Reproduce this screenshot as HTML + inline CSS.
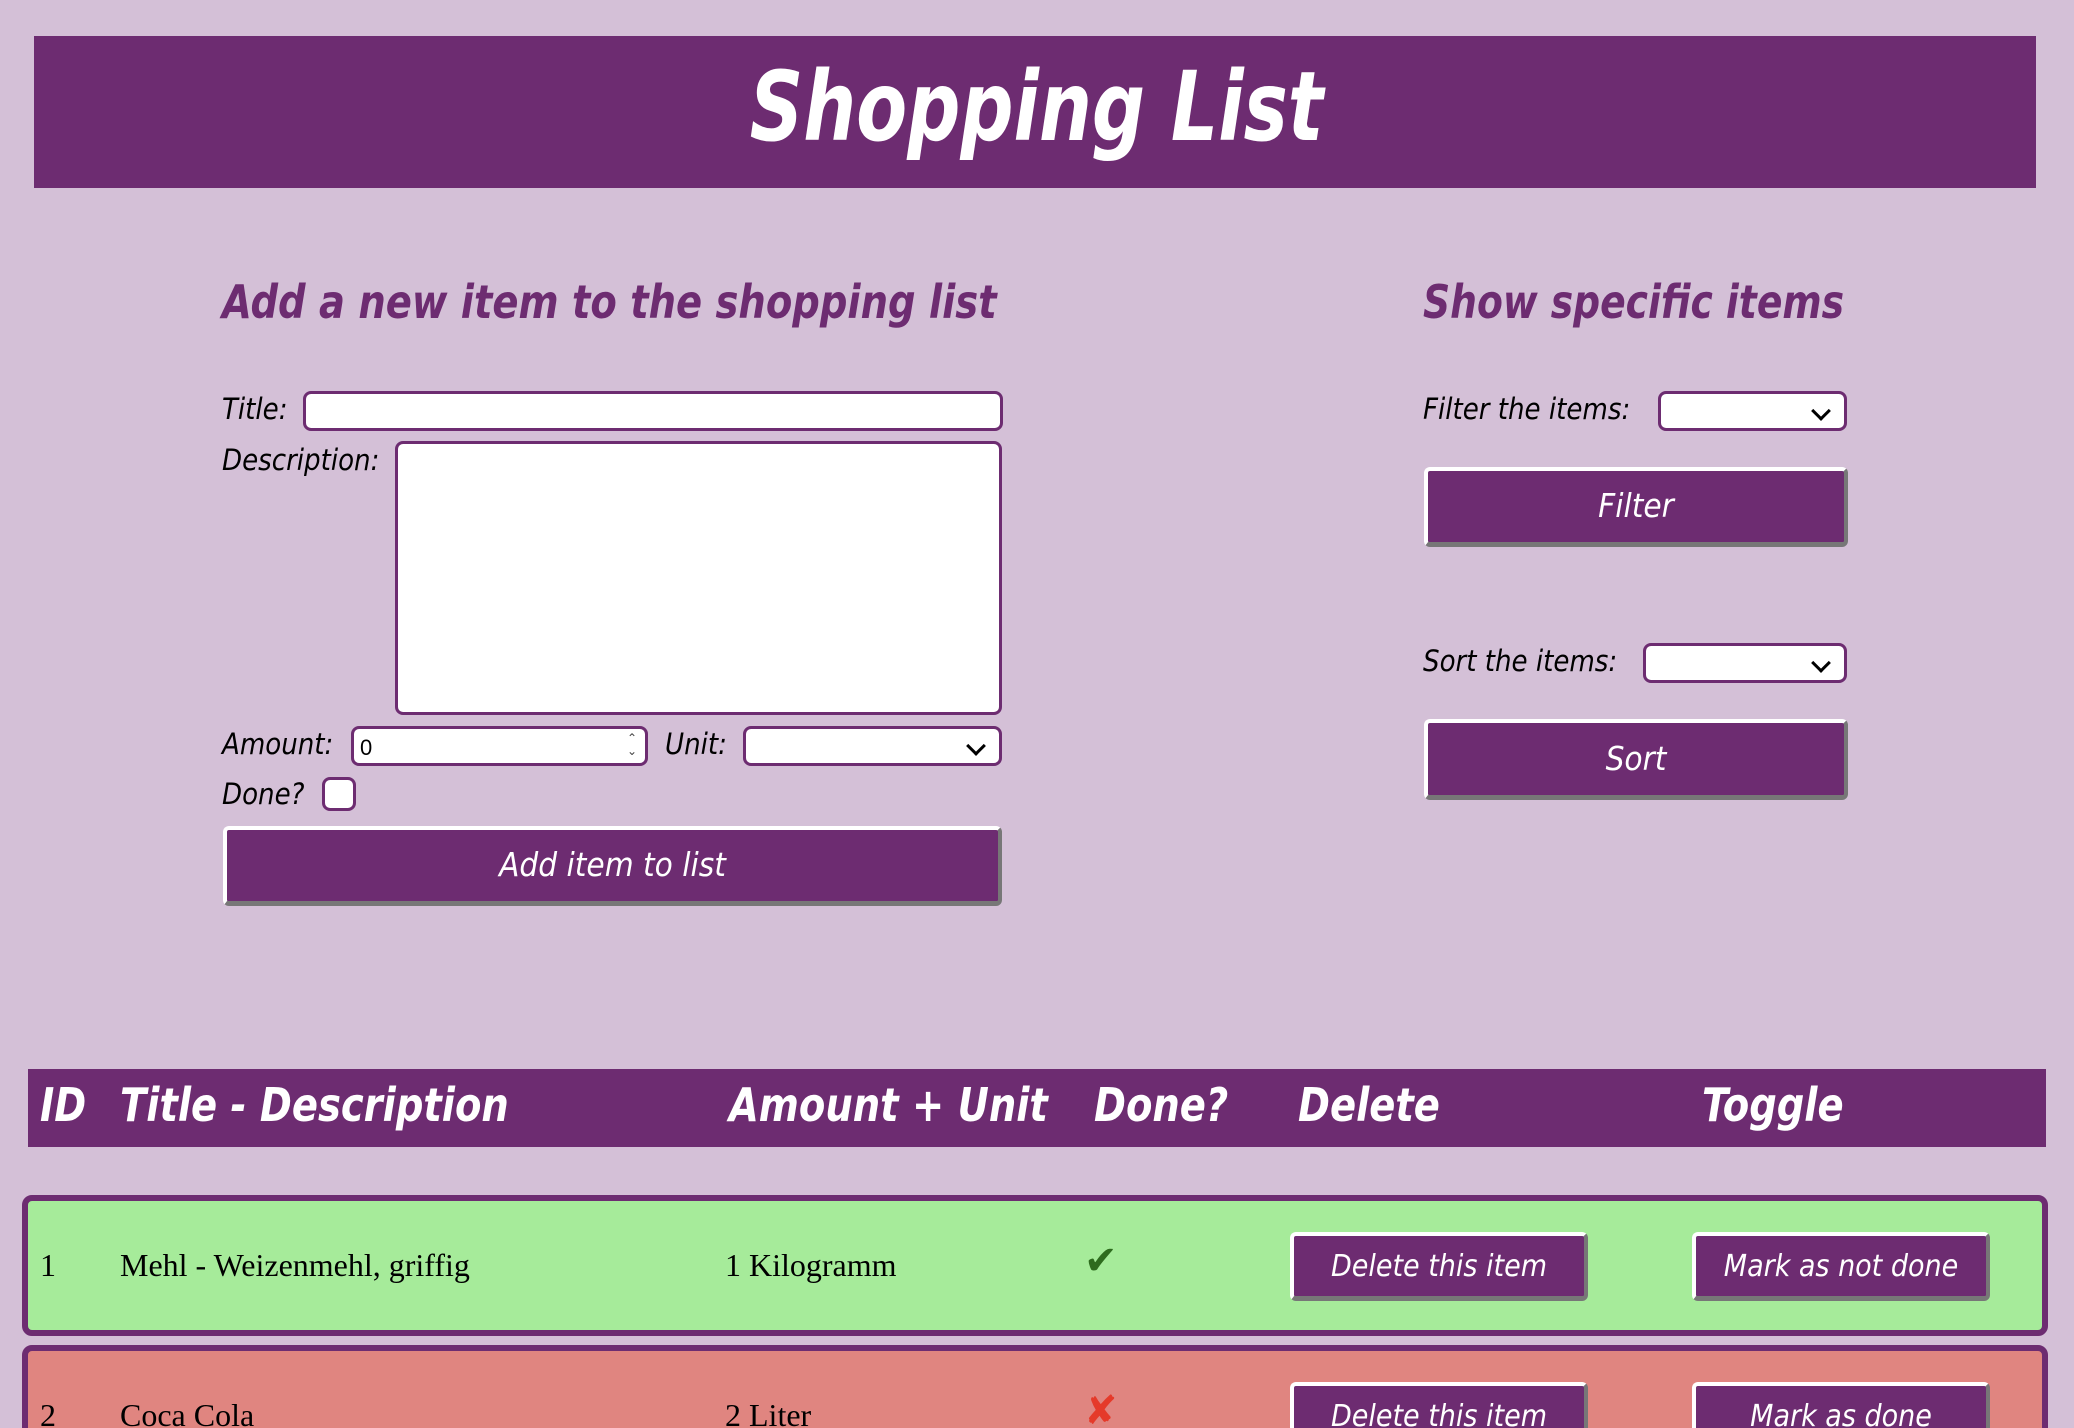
<!DOCTYPE html>
<html><head><meta charset="utf-8">
<style>
*{box-sizing:border-box;margin:0;padding:0}
html,body{width:2074px;height:1428px;overflow:hidden;background:#d4c0d7;position:relative}
.hf{font-family:"DejaVu Sans Condensed","DejaVu Sans","Liberation Sans",sans-serif;font-style:italic}
.a{position:absolute;white-space:nowrap}
.hdr{left:34px;top:36px;width:2002px;height:152px;background:#6d2c71}
.title{left:0;width:2074px;top:42px;text-align:center;color:#fff;font-size:96px;font-weight:bold;line-height:130px;transform:scaleX(0.86);transform-origin:1034px 0}
h2{position:absolute;color:#6d2c71;font-size:46px;font-weight:bold;white-space:nowrap;line-height:60px;transform:scaleX(0.93);transform-origin:0 0}
.lbl{font-size:29px;color:#000;line-height:40px}
.inp{position:absolute;background:#fff;border:3px solid #6d2c71;border-radius:8px}
.btn{position:absolute;background:#6d2c71;border-radius:6px;border-top:4px solid #fff;border-left:4px solid #fff;border-right:4px solid #777;border-bottom:5px solid #777;color:#fff;text-align:center;font-size:33px}
.chev{position:absolute;right:16px;top:10px;width:14px;height:14px;border-right:3px solid #000;border-bottom:3px solid #000;transform:rotate(45deg)}
.th{background:#6d2c71;left:28px;top:1069px;width:2018px;height:78px}
.thc{color:#fff;font-size:46px;font-weight:bold;top:1075px;line-height:60px;transform:scaleX(0.93);transform-origin:0 0}
.row{position:absolute;left:22px;width:2026px;border:6px solid #6d2c71;border-radius:10px}
.td{font-family:"Liberation Serif",serif;font-size:32px;color:#000}
.sb{font-size:30px;line-height:62px}
</style></head><body>
<div class="a hdr"></div>
<div class="a hf title">Shopping List</div>

<h2 class="hf" style="left:222px;top:272px">Add a new item to the shopping list</h2>
<h2 class="hf" style="left:1423px;top:272px;transform:scaleX(0.91)">Show specific items</h2>

<div class="a hf lbl" style="left:222px;top:389px">Title:</div>
<div class="inp" style="left:303px;top:391px;width:700px;height:40px"></div>
<div class="a hf lbl" style="left:222px;top:440px">Description:</div>
<div class="inp" style="left:395px;top:441px;width:607px;height:274px"></div>
<div class="a hf lbl" style="left:222px;top:724px">Amount:</div>
<div class="inp" style="left:351px;top:726px;width:297px;height:40px"><span style="position:absolute;left:6px;top:6px;font:22px 'Liberation Sans',sans-serif">0</span><span style="position:absolute;right:8px;top:3px;font:12px 'Liberation Sans';line-height:13px;color:#444">&#8963;<br>&#8964;</span></div>
<div class="a hf lbl" style="left:665px;top:724px">Unit:</div>
<div class="inp" style="left:743px;top:726px;width:259px;height:40px"><div class="chev"></div></div>
<div class="a hf lbl" style="left:222px;top:774px">Done?</div>
<div class="inp" style="left:322px;top:777px;width:34px;height:34px"></div>
<div class="btn hf" style="left:223px;top:826px;width:779px;height:80px;line-height:70px">Add item to list</div>

<div class="a hf lbl" style="left:1423px;top:389px">Filter the items:</div>
<div class="inp" style="left:1658px;top:391px;width:189px;height:40px"><div class="chev"></div></div>
<div class="btn hf" style="left:1424px;top:467px;width:424px;height:80px;line-height:70px">Filter</div>
<div class="a hf lbl" style="left:1423px;top:641px">Sort the items:</div>
<div class="inp" style="left:1643px;top:643px;width:204px;height:40px"><div class="chev"></div></div>
<div class="btn hf" style="left:1424px;top:719px;width:424px;height:81px;line-height:71px">Sort</div>

<div class="a th"></div>
<div class="a hf thc" style="left:40px">ID</div>
<div class="a hf thc" style="left:120px">Title - Description</div>
<div class="a hf thc" style="left:729px">Amount + Unit</div>
<div class="a hf thc" style="left:1094px">Done?</div>
<div class="a hf thc" style="left:1298px">Delete</div>
<div class="a hf thc" style="left:1702px">Toggle</div>

<div class="row" style="top:1195px;height:141px;background:#a6eb9a"></div>
<div class="a td" style="left:40px;top:1247px">1</div>
<div class="a td" style="left:120px;top:1247px">Mehl - Weizenmehl, griffig</div>
<div class="a td" style="left:725px;top:1247px">1 Kilogramm</div>
<div class="a" style="left:1084px;top:1238px;font:bold 40px 'DejaVu Sans',sans-serif;color:#2e6b1e">&#10004;</div>
<div class="btn hf sb" style="left:1290px;top:1232px;width:298px;height:69px">Delete this item</div>
<div class="btn hf sb" style="left:1692px;top:1232px;width:298px;height:69px">Mark as not done</div>

<div class="row" style="top:1345px;height:120px;background:#e08580"></div>
<div class="a td" style="left:40px;top:1397px">2</div>
<div class="a td" style="left:120px;top:1397px">Coca Cola</div>
<div class="a td" style="left:725px;top:1397px">2 Liter</div>
<div class="a" style="left:1084px;top:1388px;font:bold 40px 'DejaVu Sans',sans-serif;color:#e53a2a">&#10008;</div>
<div class="btn hf sb" style="left:1290px;top:1382px;width:298px;height:69px">Delete this item</div>
<div class="btn hf sb" style="left:1692px;top:1382px;width:298px;height:69px">Mark as done</div>
</body></html>
